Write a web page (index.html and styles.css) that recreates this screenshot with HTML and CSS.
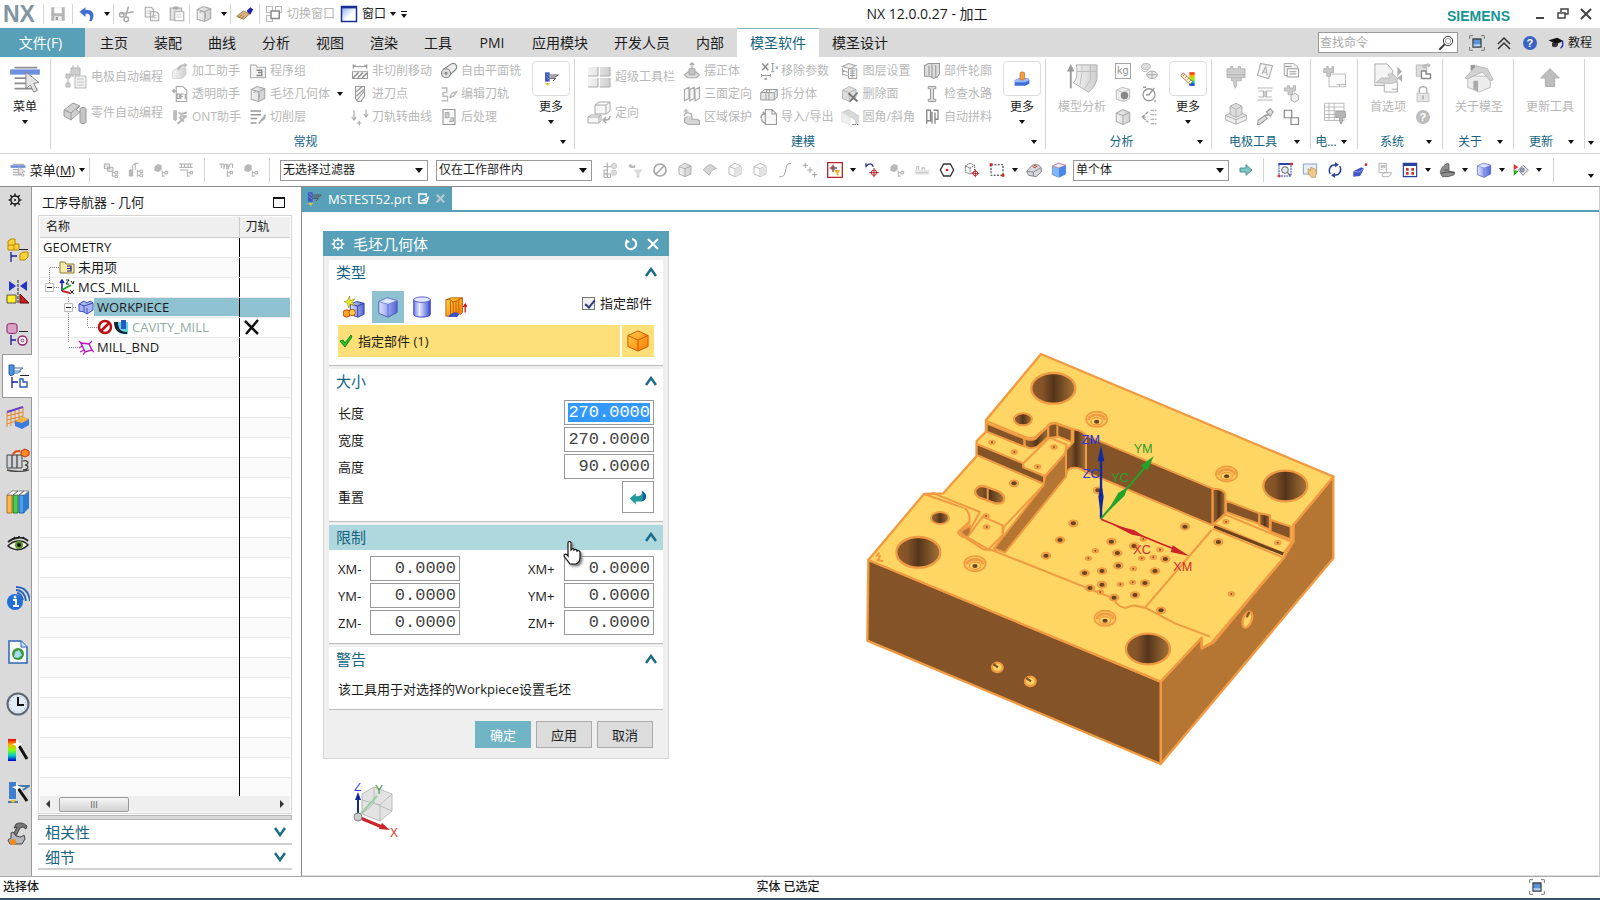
FILE: index.html
```html
<!DOCTYPE html>
<html lang="zh-CN">
<head>
    <meta charset="UTF-8">
    <meta name="viewport" content="width=device-width, initial-scale=1.0">
    <title>NX 12.0.0.27 - 加工</title>
    <link rel="stylesheet" href="styles.css">
</head>
<body>

<!-- icon sprite -->
<svg class="sprite" aria-hidden="true">
    <defs>
        <linearGradient id="gBlue" x1="0" x2="1"><stop offset="0" stop-color="#dfe6ff"/><stop offset="1" stop-color="#4d62d8"/></linearGradient>
        <linearGradient id="gGray" x1="0" x2="1"><stop offset="0" stop-color="#f4f4f4"/><stop offset="1" stop-color="#cfcfcf"/></linearGradient>
        <linearGradient id="gCyl" x1="0" x2="1"><stop offset="0" stop-color="#6f80ee"/><stop offset=".35" stop-color="#e8ecff"/><stop offset="1" stop-color="#3a4fd0"/></linearGradient>
        <linearGradient id="gRain" x1="0" y1="0" x2="0" y2="1"><stop offset="0" stop-color="#e00"/><stop offset=".25" stop-color="#fa0"/><stop offset=".5" stop-color="#8f0"/><stop offset=".75" stop-color="#0cc"/><stop offset="1" stop-color="#00c"/></linearGradient>
        <linearGradient id="gWin" x1="0" y1="0" x2="1" y2="1"><stop offset="0" stop-color="#7fa8ea"/><stop offset=".6" stop-color="#fff"/></linearGradient>
        <linearGradient id="gOr" x1="0" x2="1" y2="1"><stop offset="0" stop-color="#ffd34a"/><stop offset="1" stop-color="#ff7a00"/></linearGradient>
    </defs>
    <symbol id="save" viewBox="0 0 24 24"><path d="M3 3h18v18H3z" fill="#b5b5b5"/><path d="M7 3h10v8H7z" fill="#fff"/><path d="M7 15h10v6H7z" fill="#eee"/><path d="M9 16h3v4H9z" fill="#999"/></symbol>
    <symbol id="undo" viewBox="0 0 24 24"><path d="M2 9l8-6v4c9-2 14 5 8 15l-3-1c3-7 0-10-5-9v4z" fill="#3f6fd0"/></symbol>
    <symbol id="cut" viewBox="0 0 24 24"><path d="M14 2L10 16M4 12l17-3" stroke="#aaa" stroke-width="2" fill="none"/><circle cx="5" cy="13" r="3" fill="none" stroke="#aaa" stroke-width="2"/><circle cx="11" cy="19" r="3" fill="none" stroke="#aaa" stroke-width="2"/></symbol>
    <symbol id="copy" viewBox="0 0 24 24"><path d="M3 3h8l3 3v10H3zM10 9h8l3 3v9H10z" fill="#f5f5f5" stroke="#aaa" stroke-width="1.500"/><path d="M5 8h6M5 11h4M12 14h6M12 17h6" stroke="#bbb"/></symbol>
    <symbol id="paste" viewBox="0 0 24 24"><path d="M3 4h15v16H3z" fill="#e2e2e2" stroke="#aaa" stroke-width="1.500"/><path d="M7 2h7v4H7z" fill="#aaa"/><path d="M9 9h12v12H9z" fill="#fff" stroke="#aaa" stroke-width="1.500"/><path d="M11 13h7M11 16h7" stroke="#bbb"/></symbol>
    <symbol id="blank" viewBox="0 0 24 24"><path d="M3 6l8-4 10 3v13l-8 4-10-3z" fill="url(#gGray)" stroke="#aaa" stroke-width="1.500"/><path d="M3 6l10 3 8-4M13 9v13M6 10l4-2 4 3v7" fill="none" stroke="#aaa" stroke-width="1.500"/></symbol>
    <symbol id="brush" viewBox="0 0 24 24"><path d="M1 15l9-7 8 4-8 7z" fill="#d9b37a" stroke="#8a6a3a"/><path d="M3 17l5-4M6 19l5-4" stroke="#8a6a3a"/><path d="M14 8l5-5 4 3-4 7z" fill="#2424a8"/></symbol>
    <symbol id="switch" viewBox="0 0 24 24"><path d="M2 2h8v8H2zM14 2h8v8h-8zM2 14h8v8H2z" fill="#fff" stroke="#bbb" stroke-width="1.500"/><path d="M8 8h11v10H8z" fill="#fff" stroke="#888" stroke-width="2"/></symbol>
    <symbol id="window" viewBox="0 0 24 24"><path d="M2 2h20v20H2z" fill="url(#gWin)" stroke="#1a2d96" stroke-width="2"/><path d="M2 3h20" stroke="#1a2d96" stroke-width="3"/></symbol>
    <symbol id="menuico" viewBox="0 0 36 32"><path d="M6 3h26M2 9h32M6 21h18M6 27h26M6 15h20" stroke="#8e8e8e" stroke-width="2"/><path d="M1 5h34v6H1z" fill="#6c8fe0"/><path d="M19 8v19l5-4 4 8 4-2-4-8 6-1z" fill="#e4e4e4" stroke="#777"/></symbol>
    <symbol id="auto1" viewBox="0 0 24 24"><path d="M8 3h9v7H8zM10 0v3M15 0v3M3 9h4v4H3zM3 18h4v4H3zM5 13v5M7 11h4" fill="#cfcfcf" stroke="#b5b5b5"/><path d="M12 11h11v12H12z" fill="#f0f0f0" stroke="#bbb"/><path d="M14 14h7M14 17h7M14 20h7" stroke="#c5c5c5"/></symbol>
    <symbol id="auto2" viewBox="0 0 24 24"><path d="M1 9l9-7 7 3-4 4 4 2-9 8-7-4z" fill="#d0d0d0" stroke="#9c9c9c"/><path d="M8 12l8-7M8 19v-7l-7-3" stroke="#999" fill="none"/><path d="M17 8c0-2 6-2 6 0v13c0 2-6 2-6 0z" fill="#c5c5c5" stroke="#999"/></symbol>
    <symbol id="help1" viewBox="0 0 24 24"><path d="M2 12l6-4h12v9l-5 5H2z" fill="url(#gGray)" stroke="#ccc"/><path d="M8 10c2-6 6-7 10-7l-1-2 5 3-4 4v-2c-4 0-5 1-7 5z" fill="#bbb"/></symbol>
    <symbol id="def" viewBox="0 0 24 24"><path d="M7 2h9l5 5v15H7z" fill="#fff" stroke="#aaa" stroke-width="1.500"/><path d="M1 8h6M4 5v6" stroke="#aaa" stroke-width="2"/><path d="M8 12h3v6H8zM13 12h4M13 15h3M13 12v7M19 12v7" stroke="#999" stroke-width="1.500" fill="none"/></symbol>
    <symbol id="tools" viewBox="0 0 24 24"><path d="M3 3h5v12l-2 3-3-3z" fill="#bbb"/><path d="M10 6l4 2 7-2M11 12l6 6M20 11L9 21M12 11h9" stroke="#b5b5b5" stroke-width="2.500" fill="none"/></symbol>
    <symbol id="prog" viewBox="0 0 24 24"><path d="M2 4h7l2 3h11v14H2z" fill="#f3f3f3" stroke="#aaa" stroke-width="1.500"/><path d="M10 11h7v3h-5M17 14v4h-7" fill="none" stroke="#888" stroke-width="1.800"/></symbol>
    <symbol id="layers" viewBox="0 0 24 24"><path d="M2 4h14M2 9h14M2 14h9M2 20h8" stroke="#999" stroke-width="1.800"/><path d="M22 9l-9 12M20 10c3 2 0 6-6 8" stroke="#aaa" stroke-width="2" fill="none"/></symbol>
    <symbol id="noncut" viewBox="0 0 24 24"><path d="M3 3v6M21 3v6M3 6h18M3 6l3-2M21 6l-3-2M2 13h20v9H2z" fill="none" stroke="#999" stroke-width="1.500"/><path d="M3 21l7-7M9 21l7-7M15 21l6-6" stroke="#888" stroke-width="2"/></symbol>
    <symbol id="plunge" viewBox="0 0 24 24"><path d="M6 2h12v13l-5 7H9l-3-4z" fill="#f5f5f5" stroke="#999" stroke-width="1.500"/><path d="M7 15l10-9M8 20L18 8M7 9l8-7" stroke="#999" stroke-width="1.500"/></symbol>
    <symbol id="path" viewBox="0 0 24 24"><path d="M4 3v12M1 12l3 4 3-4M20 2v8M17 8l3 4 3-4M8 20h6M11 17v6" stroke="#aaa" stroke-width="1.600" fill="none"/></symbol>
    <symbol id="free" viewBox="0 0 24 24"><path d="M4 10L16 2c5-1 8 4 5 8L10 20" fill="#eee" stroke="#888" stroke-width="1.500"/><circle cx="8" cy="15" r="6" fill="#ddd" stroke="#888" stroke-width="1.500"/><circle cx="8" cy="15" r="2" fill="#888"/></symbol>
    <symbol id="edit" viewBox="0 0 24 24"><path d="M2 4h7v6H4v5h6v6H2M13 17l3-6 6-2-4 6-5 2" fill="none" stroke="#bbb" stroke-width="2"/></symbol>
    <symbol id="post" viewBox="0 0 24 24"><path d="M4 2h16v20H4z" fill="#f8f8f8" stroke="#999" stroke-width="1.500"/><path d="M7 6h5v7H7zM14 13h4v5h-6" fill="#ccc" stroke="#999"/></symbol>
    <symbol id="cutter" viewBox="0 0 24 24"><path d="M3 2h7v14H3z" fill="#3f57c4"/><path d="M5 4l4 3M4 8l5 4" stroke="#9ab"/><path d="M2 18h9l-4 4z" fill="#e6c33c"/><path d="M10 6h13l-5 3h-7M10 11h9l-4 4" fill="none" stroke="#555" stroke-width="1.500"/></symbol>
    <symbol id="tiles" viewBox="0 0 24 24"><path d="M1 2h10v9H1zM13 2h10v9H13zM1 13h10v9H1zM13 13h10v9H13z" fill="url(#gGray)"/><path d="M1 11h10V2M13 11h10V2M1 22h10v-9M13 22h10v-9" fill="none" stroke="#aaa"/></symbol>
    <symbol id="orient" viewBox="0 0 24 24"><path d="M8 4l4-3h11v9l-4 3H8zM8 4h11l4-3M19 4v9M1 16l3-2h10v6l-2 2H1zM1 16h11l2-2M12 16v6" fill="#f7f7f7" stroke="#aaa"/><path d="M23 15c0 4-3 4-6 4m2-3l-3 3 3 3" fill="none" stroke="#aaa" stroke-width="1.500"/></symbol>
    <symbol id="align" viewBox="0 0 24 24"><path d="M12 1v8M9 4l3-3 3 3M2 17l5-4h10l5 4-4 4H6z" fill="#ddd" stroke="#aaa" stroke-width="1.500"/><path d="M8 9h8v8H8z" fill="#c4c4c4" stroke="#999"/></symbol>
    <symbol id="three" viewBox="0 0 24 24"><path d="M2 6l6-3v15l-6 3zM9 6l6-3v15l-6 3zM16 6l6-3v15l-6 3z" fill="#f5f5f5" stroke="#aaa" stroke-width="1.500"/></symbol>
    <symbol id="region" viewBox="0 0 24 24"><path d="M4 1v6M1 4h6M2 14l4-3h6v4h7l3 2v5H7l-5-3z" fill="#d5d5d5" stroke="#aaa" stroke-width="1.500"/><path d="M2 11V8l4-2 5 2v4" fill="#f3f3f3" stroke="#aaa" stroke-width="1.500"/></symbol>
    <symbol id="rmparam" viewBox="0 0 24 24"><path d="M3 2l8 9M11 2l-8 9" stroke="#888" stroke-width="2"/><path d="M15 2h4M17 2v11M15 13h4M21 6l3 3M24 6l-3 3M2 16v4M14 16v4M2 18h12M6 21l3 3M9 21l-3 3" stroke="#999" stroke-width="1.400" fill="none"/></symbol>
    <symbol id="split" viewBox="0 0 24 24"><path d="M1 10l5-4h17v10l-4 4H1zM1 10h18l4-4M19 10v10M10 6l-2 4v10M13 6l-1 4v10" fill="#e5e5e5" stroke="#999" stroke-width="1.300"/></symbol>
    <symbol id="impexp" viewBox="0 0 24 24"><path d="M7 2h9l6 6v14H7zM16 2v6h6" fill="#f8f8f8" stroke="#999" stroke-width="1.500"/><path d="M2 14c-1-4 1-6 4-6l-2-3M2 15c1 4 3 5 6 5" fill="none" stroke="#999" stroke-width="2"/></symbol>
    <symbol id="layset" viewBox="0 0 24 24"><path d="M2 6l8-4 10 3-8 4zM2 11l8 3M2 16l8 3M2 6v12" fill="#eee" stroke="#aaa" stroke-width="1.500"/><path d="M10 9h11v13H10zM12 12h7M12 15h7M12 18h7M15 10v11" fill="#f8f8f8" stroke="#999" stroke-width="1.200"/></symbol>
    <symbol id="delface" viewBox="0 0 24 24"><path d="M2 7l9-5 9 4v11l-9 5-9-4z" fill="#ddd" stroke="#aaa"/><path d="M2 7l9 3 9-4M11 10v12" fill="none" stroke="#aaa"/><path d="M10 11l12 11M22 10L12 22" stroke="#777" stroke-width="2.500"/></symbol>
    <symbol id="fillet" viewBox="0 0 24 24"><path d="M1 6l9-4 13 8v10l-3 1c0-6-4-8-8-9z" fill="#d8d8d8" stroke="#c3c3c3"/><path d="M1 6v12l11 4V12z" fill="#eee" stroke="#ddd"/><path d="M15 22h8" stroke="#666" stroke-width="1.500" stroke-dasharray="2 1"/></symbol>
    <symbol id="outline" viewBox="0 0 24 24"><path d="M2 5l5-3h15v14l-3 4-5 2-5-3H2z" fill="#ddd" stroke="#999" stroke-width="1.400"/><path d="M8 5v13M12 3v17M17 4v16" stroke="#999" stroke-width="1.400"/></symbol>
    <symbol id="water" viewBox="0 0 24 24"><path d="M7 2h10v3h-3v14h3v3H7v-3h3V5H7z" fill="#ddd" stroke="#999" stroke-width="1.300"/></symbol>
    <symbol id="autofit" viewBox="0 0 24 24"><path d="M5 3h5v14H5zM14 3h6v12h-4v6M12 5v16M5 17v4M16 6v9" fill="none" stroke="#888" stroke-width="1.800"/></symbol>
    <symbol id="stamp" viewBox="0 0 24 24"><path d="M1 14l6-3h14l2 3v5l-6 3H1z" fill="#3f6fd6"/><path d="M1 14l6-3h14l2 3-6 3H1z" fill="#9bb9f4"/><path d="M9 3c0-2 7-2 7 0v9c0 2-7 2-7 0z" fill="#f0a04a" stroke="#b06a20"/></symbol>
    <symbol id="model" viewBox="0 0 34 32"><path d="M11 2h22v13c0 6-4 12-9 16L8 21c4-4 4-11 3-19z" fill="url(#gGray)" stroke="#aaa"/><path d="M12 9h21M17 2v8l-2 13M26 2v16l-6 9" fill="none" stroke="#bbb"/><path d="M4 27V9H1l4-8 4 8H6v18z" fill="#999"/></symbol>
    <symbol id="cubedot" viewBox="0 0 24 24"><path d="M3 7l8-4 10 3v12l-8 4-10-3z" fill="#eee" stroke="#bbb" stroke-width="1.300"/><path d="M3 7l10 3 8-4M13 10v12" fill="none" stroke="#bbb"/><circle cx="14" cy="14" r="5" fill="#888"/></symbol>
    <symbol id="cubeg" viewBox="0 0 24 24"><path d="M3 7l9-5 9 4v12l-9 4-9-4z" fill="url(#gGray)" stroke="#aaa" stroke-width="1.400"/><path d="M3 7l9 3 9-4M12 10v12" fill="none" stroke="#aaa" stroke-width="1.400"/></symbol>
    <symbol id="cubew" viewBox="0 0 24 24"><path d="M3 7l9-5 9 4v12l-9 4-9-4z" fill="#fafafa" stroke="#b5b5b5" stroke-width="1.400"/><path d="M3 7l9 3 9-4M12 10v12" fill="none" stroke="#bbb" stroke-width="1.400"/><path d="M12 10l9-4v12l-9 4z" fill="#e3e3e3"/></symbol>
    <symbol id="balls" viewBox="0 0 24 24"><ellipse cx="8" cy="6" rx="6" ry="4" fill="#ddd" stroke="#aaa"/><ellipse cx="16" cy="17" rx="7" ry="5" fill="#e8e8e8" stroke="#999"/><path d="M2 10c3 4 6 3 9 1M16 12v10M9 17h14" fill="none" stroke="#999"/></symbol>
    <symbol id="gauge" viewBox="0 0 24 24"><circle cx="12" cy="13" r="8" fill="none" stroke="#999" stroke-width="1.700"/><path d="M12 13l7-9M8 13h5M4 3h4M20 20v3" stroke="#999" stroke-width="1.700"/></symbol>
    <symbol id="split3" viewBox="0 0 24 24"><path d="M11 5l-8 7 8 7M3 12h7M14 3h8M14 9h8M14 15h8M14 21h8" fill="none" stroke="#999" stroke-width="1.600" stroke-dasharray="5 1"/></symbol>
    <symbol id="ruler" viewBox="0 0 24 24"><path d="M14 2h8v20h-8z" fill="url(#gRain)"/><path d="M1 7l4-4 14 13-4 4z" fill="#fff4cc" stroke="#a33"/><path d="M5 7l2-2M8 10l2-2M11 13l2-2M14 16l2-2" stroke="#a33"/></symbol>
    <symbol id="holder" viewBox="0 0 28 32"><path d="M2 5h5V2h3v3h7V2h3v3h6v12h-5v4h-6v5l-2 5-2-5v-5H8v-4H2z" fill="#cdcdcd" stroke="#aaa"/><path d="M2 13h24M8 17h13" stroke="#aaa"/></symbol>
    <symbol id="block" viewBox="0 0 32 32"><path d="M2 19l14-6 14 6v6l-14 6-14-6z" fill="#eee" stroke="#999"/><path d="M2 19l14 6 14-6M16 25v6" fill="none" stroke="#999"/><path d="M8 7l8-4 8 4v11l-8 4-8-4z" fill="#ddd" stroke="#999"/><path d="M8 7l8 4 8-4M16 11v11" fill="none" stroke="#aaa"/></symbol>
    <symbol id="plana" viewBox="0 0 24 24"><path d="M6 2l16 3-5 17-15-4zM8 16l5-10 2 12M9 13l6 1" fill="#f5f5f5" stroke="#aaa" stroke-width="1.400"/></symbol>
    <symbol id="section" viewBox="0 0 24 24"><path d="M2 4h20M2 20h20M3 8h7v8H3M21 8h-7v8h7M12 8v8" stroke="#b5b5b5" stroke-width="1.600" fill="none"/></symbol>
    <symbol id="pencil" viewBox="0 0 24 24"><path d="M14 5l5-4 4 4-4 6zM3 16l9-6 3 4-10 8H2z" fill="#ddd" stroke="#999" stroke-width="1.400"/><path d="M12 10l5-1" stroke="#999" stroke-width="2"/></symbol>
    <symbol id="cards" viewBox="0 0 24 24"><path d="M3 2h12l6 4v12H3z" fill="#f4f4f4" stroke="#aaa" stroke-width="1.300"/><path d="M7 9h15v11H7zM10 13h9M10 16h9M4 6h9" fill="#fafafa" stroke="#999" stroke-width="1.300"/></symbol>
    <symbol id="holder2" viewBox="0 0 24 24"><path d="M3 4h4V1h3v3h5V1h3v7h-4v5H8V8H3z" fill="#ccc" stroke="#aaa"/><path d="M12 14l5-3 5 3v6l-5 3-5-3z" fill="#eee" stroke="#999"/></symbol>
    <symbol id="boxes" viewBox="0 0 24 24"><path d="M3 3h10v10H3zM12 13h10v9H12z" fill="#fafafa" stroke="#888" stroke-width="1.600"/></symbol>
    <symbol id="sheet" viewBox="0 0 32 32"><path d="M8 12h22v17H8zM18 26h12M22 26v3" fill="#fafafa" stroke="#aaa"/><path d="M1 5h4V2h2v3h5V2h2v8h-4v5H5v-5H1z" fill="#c8c8c8" stroke="#aaa"/></symbol>
    <symbol id="grid" viewBox="0 0 32 32"><path d="M2 3h26v23H2zM2 8h26M2 13h26M2 18h26M2 22h26M8 3v23M15 3v23" fill="none" stroke="#aaa"/><path d="M17 14h13v8h-4v5l-2 4-2-4v-5h-5z" fill="#b5b5b5" stroke="#999"/></symbol>
    <symbol id="pref" viewBox="0 0 32 32"><path d="M2 1h13l6 7v16H2z" fill="#f4f4f4" stroke="#aaa"/><path d="M12 20h14v11H12zM20 28h6" fill="#fafafa" stroke="#aaa"/><path d="M3 21l6-5h9l-2-4 4-1 6 5v4l-7 2z" fill="#d2d2d2" stroke="#bbb"/><path d="M26 4l5 5-5 5zM31 12v8l-5-4z" fill="#b0b0b0"/></symbol>
    <symbol id="clip" viewBox="0 0 24 24"><path d="M3 4h14v15H3z" fill="#ddd" stroke="#aaa"/><path d="M11 7c0-4 4-5 7-4l-1-2 6 3-4 4v-2c-3 0-4 0-4 3z" fill="#bbb"/><path d="M10 12h6v4h6v6H10z" fill="#fff" stroke="#888" stroke-width="1.800"/></symbol>
    <symbol id="lock" viewBox="0 0 24 24"><path d="M7 11V6c0-5 10-5 10 0v5" fill="none" stroke="#b5b5b5" stroke-width="2"/><path d="M4 11h16v11H4z" fill="#e5e5e5" stroke="#b5b5b5"/><path d="M12 14v5" stroke="#aaa" stroke-width="2"/></symbol>
    <symbol id="home" viewBox="0 0 32 32"><path d="M7 2h5v6H7z" fill="#999"/><path d="M4 14v12l12 5 12-5V14z" fill="#ececec" stroke="#bbb"/><path d="M1 16L13 3l12 3 6 12-3 1-8-9-4 1L4 17z" fill="#d2d2d2" stroke="#b5b5b5"/><path d="M10 19h5v11l-5-2z" fill="#aaa"/></symbol>
    <symbol id="up" viewBox="0 0 32 32"><path d="M16 6l10 10h-5v9H11v-9H6z" fill="#bdbdbd" stroke="#aaa"/></symbol>
    <symbol id="filt" viewBox="0 0 24 24"><path d="M2 3h8v7H2zM7 8h8v6H7z" fill="#e5e5e5" stroke="#aaa" stroke-width="1.400"/><path d="M14 14v8M14 16h4M14 21h4M18 14h4v4h-4zM18 20h4v3h-4z" fill="none" stroke="#aaa" stroke-width="1.400"/></symbol>
    <symbol id="filt4" viewBox="0 0 24 24"><path d="M2 12h5v9H2zM7 5l4-3h5M7 5v7" fill="#bbb" stroke="#aaa" stroke-width="1.400"/><path d="M11 3v9M14 12v10M14 14h4M14 20h4M18 12h4v4h-4zM18 18h4v4h-4z" fill="none" stroke="#aaa" stroke-width="1.400"/></symbol>
    <symbol id="filt2" viewBox="0 0 24 24"><path d="M2 3h20M2 8h20M5 3v5M10 3v5M15 3v5M19 3v5M3 12h12" stroke="#aaa" stroke-width="1.500"/><path d="M14 13v9M14 16h4M14 21h4M18 14h4v4h-4z" fill="none" stroke="#aaa" stroke-width="1.400"/></symbol>
    <symbol id="filt3" viewBox="0 0 24 24"><path d="M2 7l5-4 6 2v7l-5 3-6-2z" fill="#b8b8b8"/><path d="M14 13v9M14 16h4M14 21h4M18 14h4v4h-4z" fill="none" stroke="#aaa" stroke-width="1.400"/></symbol>
    <symbol id="toolf" viewBox="0 0 24 24"><path d="M2 3h3v6M5 3h4v8M9 8l2-5h2v8M15 3v8l3-8h4v6" fill="none" stroke="#aaa" stroke-width="1.500"/><path d="M14 13v9M14 16h4M14 21h4M18 14h4v4h-4z" fill="none" stroke="#aaa" stroke-width="1.400"/></symbol>
    <symbol id="selall" viewBox="0 0 24 24"><path d="M8 1v12M2 7h12M3 12h5v5H3zM3 18h5v5H3zM8 18h5v5H8z" fill="none" stroke="#aaa" stroke-width="1.500"/><circle cx="18" cy="6" r="4" fill="#ddd" stroke="#bbb"/><circle cx="18" cy="16" r="4" fill="#ddd" stroke="#bbb"/></symbol>
    <symbol id="funnel" viewBox="0 0 24 24"><path d="M2 6c2-4 5-3 6 0l4-2v5H5z" fill="#bbb"/><path d="M11 12h11l-4 5v6h-3v-6z" fill="#ddd" stroke="#ccc"/></symbol>
    <symbol id="no" viewBox="0 0 24 24"><circle cx="12" cy="12" r="9" fill="none" stroke="#a5a5a5" stroke-width="2.500"/><path d="M6 18L18 6" stroke="#a5a5a5" stroke-width="2.500"/></symbol>
    <symbol id="face" viewBox="0 0 24 24"><path d="M2 12C7 5 11 4 14 4l8 6c-4 0-9 4-11 10z" fill="#d5d5d5" stroke="#aaa" stroke-width="1.300"/></symbol>
    <symbol id="curve" viewBox="0 0 24 24"><path d="M3 22c16 2 4-20 18-20" fill="none" stroke="#aaa" stroke-width="1.600"/></symbol>
    <symbol id="pluses" viewBox="0 0 24 24"><path d="M5 1v8M1 5h8M12 8v8M8 12h8M19 15v8M15 19h8" stroke="#999" stroke-width="1.300"/></symbol>
    <symbol id="snap" viewBox="0 0 24 24"><path d="M1 1h22v22H1z" fill="#fff" stroke="#b8262d" stroke-width="2"/><path d="M9 4v11M4 9h11" stroke="#333" stroke-width="1.500"/><circle cx="9" cy="9" r="3" fill="none" stroke="#b8262d"/><path d="M11 12h9l-3 4v5l-3-2v-3z" fill="#f0b020"/></symbol>
    <symbol id="snap2" viewBox="0 0 24 24"><path d="M3 8V2M3 7c4-6 9-5 11 0" fill="none" stroke="#27348b" stroke-width="2"/><path d="M15 9v14M8 16h14" stroke="#b8262d" stroke-width="1.500"/><circle cx="15" cy="16" r="4" fill="none" stroke="#b8262d" stroke-width="1.500"/></symbol>
    <symbol id="bars" viewBox="0 0 24 24"><path d="M1 12h22v7H1z" fill="#e5e5e5"/><path d="M4 12V7h3v5M12 12V9h4v3M3 16h18" stroke="#ccc" stroke-width="2" fill="none"/></symbol>
    <symbol id="hex" viewBox="0 0 24 24"><path d="M7 3h10l5 9-5 9H7l-5-9z" fill="#fff" stroke="#333" stroke-width="2"/><circle cx="12" cy="12" r="2" fill="#c22"/></symbol>
    <symbol id="dotcube" viewBox="0 0 24 24"><path d="M2 6l7-4 7 3v9l-7 4-7-3zM2 6l7 3 7-4M9 9v8" fill="none" stroke="#444" stroke-width="1.400" stroke-dasharray="2 1.500"/><path d="M17 11v12M11 17h12" stroke="#b8262d" stroke-width="1.400"/><circle cx="17" cy="17" r="3.500" fill="none" stroke="#b8262d" stroke-width="1.400"/></symbol>
    <symbol id="marq" viewBox="0 0 24 24"><path d="M3 4h18v16H3z" fill="none" stroke="#333" stroke-width="1.600" stroke-dasharray="3 2"/><path d="M1 2h4v4H1zM19 18h4v4h-4z" fill="#d22"/></symbol>
    <symbol id="shaded" viewBox="0 0 24 24"><path d="M1 14l8-9c6-3 12 0 14 4v6l-8 7-11-2z" fill="#d5d9df" stroke="#555"/><path d="M1 14l10 1 11-6M11 15v6" fill="none" stroke="#666"/><path d="M10 7l5 2M12 5l5 2" stroke="#c33" stroke-width="1.500"/></symbol>
    <symbol id="bcube" viewBox="0 0 24 24"><path d="M2 6l9-4 11 3v13l-10 5-10-4z" fill="url(#gBlue)" stroke="#4658b8"/><path d="M2 6l10 3 10-4-11-3z" fill="#dfe7ff" stroke="#7385d8"/><path d="M12 9v14" stroke="#5b6cd0"/></symbol>
    <symbol id="redcube" viewBox="0 0 24 24"><path d="M2 6l9-4 11 3v13l-10 5-10-4z" fill="#7fb4f5" stroke="#5a88d8"/><path d="M2 6l10 3 10-4-11-3z" fill="#e6eefc" stroke="#d66"/><path d="M12 9l10-4v13l-10 5z" fill="#4b87e8"/></symbol>
    <symbol id="arrow" viewBox="0 0 24 24"><path d="M3 9h9V4l9 8-9 8v-5H3z" fill="#7fc6c6" stroke="#3c7f86" stroke-width="1.300"/></symbol>
    <symbol id="fit" viewBox="0 0 24 24"><path d="M3 3h18v18H3z" fill="#fff" stroke="#2b46a8" stroke-width="1.500" stroke-dasharray="3 1"/><path d="M2 3h20" stroke="#2b46a8" stroke-width="3"/><circle cx="12" cy="12" r="5" fill="#dfeaf5" stroke="#666" stroke-width="1.500"/><path d="M16 16l4 5" stroke="#666" stroke-width="2"/><path d="M1 19h4v4H1zM20 1h4v4h-4z" fill="#d33"/></symbol>
    <symbol id="pan" viewBox="0 0 24 24"><path d="M2 3h20v15H2z" fill="#e8effa" stroke="#8aa0c8" stroke-width="1.500"/><path d="M9 10l4 3V8l3 1 4 2 2 5-2 7h-6l-5-7z" fill="#f0c98a" stroke="#b98d4a"/></symbol>
    <symbol id="rotate" viewBox="0 0 24 24"><path d="M5 18C1 11 5 4 13 4M19 6c4 7 0 14-8 14" fill="none" stroke="#2f4496" stroke-width="2.200"/><path d="M12 0l6 4-6 4zM12 24l-6-4 6-4z" fill="#2f4496"/></symbol>
    <symbol id="persp" viewBox="0 0 24 24"><path d="M2 14l12-6 4 2-6 11-10 1z" fill="#4358c8"/><path d="M2 14l8 1 8-5" stroke="#aab6f5" fill="none"/><circle cx="21" cy="4" r="2" fill="#d22"/></symbol>
    <symbol id="grayd" viewBox="0 0 24 24"><path d="M3 2h11v14H3zM6 5h2v3H6zM10 5h2v3h-2zM6 11h2M8 18l3-2h11l-4 6H8z" fill="#fafafa" stroke="#aaa" stroke-width="1.300"/></symbol>
    <symbol id="layout4" viewBox="0 0 24 24"><path d="M2 2h20v20H2z" fill="#fff" stroke="#27429c" stroke-width="1.800"/><path d="M2 4h20" stroke="#27429c" stroke-width="4"/><path d="M6 9h4v4H6zM14 9h4v4h-4zM6 15h4v4H6zM14 15h4v4h-4z" fill="#c8352d"/></symbol>
    <symbol id="lshape" viewBox="0 0 24 24"><path d="M2 16C3 8 8 4 13 2l2 1v11l8 1v4l-9 3H5z" fill="#8f8f8f" stroke="#444"/><path d="M3 17l11-2 9 1M8 12h6" fill="none" stroke="#333"/></symbol>
    <symbol id="clipv" viewBox="0 0 24 24"><path d="M1 3l7 5-7 4z" fill="#d33"/><path d="M1 12l7 2-7 7z" fill="#2a2"/><path d="M8 12l7-7 8 7-8 8z" fill="#e3e7ef" stroke="#556"/><circle cx="14" cy="12" r="3" fill="#9ab" stroke="#556"/></symbol>
    <symbol id="gear" viewBox="0 0 24 24"><circle cx="12" cy="12" r="7" fill="none" stroke="currentColor" stroke-width="2.600"/><circle cx="12" cy="12" r="1.800" fill="currentColor"/><path d="M12 1v4M12 19v4M1 12h4M19 12h4M4 4l3 3M17 17l3 3M20 4l-3 3M7 17l-3 3" stroke="currentColor" stroke-width="2.600"/></symbol>
    <symbol id="frame" viewBox="0 0 24 24"><path d="M1 6V1h5M18 1h5v5M23 18v5h-5M6 23H1v-5" fill="none" stroke="#777" stroke-width="1.500"/><path d="M6 6h12v12H6z" fill="#5b93d8" stroke="#444" stroke-width="2"/><path d="M7 14h10v3H7z" fill="#b9dcf8"/></symbol>
    <symbol id="cap" viewBox="0 0 24 24"><path d="M1 8l13-4 9 5-11 5z" fill="#111"/><path d="M6 12v5c4 2 7 2 9-2v-3z" fill="#333"/><path d="M22 9v7l-3 4" stroke="#22b" stroke-width="2" fill="none"/></symbol>
    <symbol id="search" viewBox="0 0 24 24"><circle cx="15" cy="9" r="7" fill="none" stroke="#333" stroke-width="1.500"/><circle cx="15" cy="9" r="4" fill="none" stroke="#777"/><path d="M10 14l-8 8" stroke="#333" stroke-width="3"/></symbol>
    <!-- resource bar -->
    <symbol id="r1" viewBox="0 0 24 24"><path d="M2 3l3-2h4v5h4v6H2z" fill="#ffd23a" stroke="#b98600"/><path d="M2 7h6v5M8 7l2-1" fill="none" stroke="#b98600"/><path d="M14 16l3-2h5v5l-3 3h-5z" fill="#ffd23a" stroke="#b98600"/><path d="M13 11.500h9" stroke="#222"/><path d="M5 14v10M5 18h6" stroke="#1a1a9a" stroke-width="1.300"/></symbol>
    <symbol id="r2" viewBox="0 0 24 24"><path d="M3 1l7 5-7 5zM21 1l-7 5 7 5z" fill="#2433c8"/><path d="M12 0v24" stroke="#222" stroke-dasharray="3 1"/><path d="M1 15h9v8H1z" fill="#ffee22" stroke="#555"/><path d="M14 14l9 9h-9z" fill="#c81e1e" stroke="#600"/></symbol>
    <symbol id="r3" viewBox="0 0 24 24"><path d="M1 3c0-2 10-2 10 0v7c0 2-10 2-10 0z" fill="#d9a3c6" stroke="#8a1f6a"/><path d="M13 9.500h9" stroke="#222"/><path d="M5 13v10M5 18h5" stroke="#1a1a9a" stroke-width="1.300"/><circle cx="16.500" cy="18.500" r="4.500" fill="#fff" stroke="#8a1f6a" stroke-width="1.400"/><circle cx="16.500" cy="18.500" r="1.500" fill="none" stroke="#8a1f6a"/></symbol>
    <symbol id="r4" viewBox="0 0 24 24"><path d="M2 1h5v9l-3 2-2-2z" fill="#4a90dc" stroke="#2a5ca8"/><path d="M7 4h9l-3 2M7 7h7l-3 2H7" fill="none" stroke="#3a6fb8"/><path d="M13 11.500h9" stroke="#222"/><path d="M5 13v11M5 18h6" stroke="#1a1a9a" stroke-width="1.300"/><path d="M13 15h3v3h4v5h-7z" fill="#fff" stroke="#2a5ca8" stroke-width="1.400"/></symbol>
    <symbol id="r5" viewBox="0 0 24 24"><path d="M1 6v15M5 5v15M9 4v14M13 3v12M17 1v12M1 10l16-4M1 14l16-4M1 18l12-4" stroke="#e8872a" fill="none"/><path d="M1 6L17 1" stroke="#6a3fc8" stroke-width="2"/><path d="M9 15l8-4 6 2v6l-7 4-7-3z" fill="#3b7be0"/><path d="M9 15l8-4 6 2-7 4z" fill="#ffb23e"/></symbol>
    <symbol id="r6" viewBox="0 0 24 24"><path d="M1 7h15v13H1z" fill="#d0d4d8" stroke="#444"/><path d="M6 7v13M11 7v13M1 22c8 2 15 2 22 0M17 13c6-2 6 4 2 4 4 0 4 5-2 5" fill="none" stroke="#444" stroke-width="1.300"/><path d="M15 3l4-2 4 2v4l-4 2-4-2z" fill="#ff8a2a" stroke="#c03000"/><path d="M7 7c1-4 4-4 7-4" stroke="#e04a10" stroke-width="2" fill="none"/></symbol>
    <symbol id="r7" viewBox="0 0 24 24"><path d="M1 5h5v18H1z" fill="#ffb64a" stroke="#a55c00" stroke-width=".8"/><path d="M7 5h5v18H7z" fill="#4ecb4e" stroke="#167016" stroke-width=".8"/><path d="M13 5h5v18h-5z" fill="#4aa0ee" stroke="#0b4c94" stroke-width=".8"/><path d="M18 5l5-4v17l-5 5z" fill="#2e7cd0"/><path d="M1 5l5-4h17l-5 4z" fill="#fff" stroke="#777" stroke-width=".8"/><path d="M7 5l5-4M13 5l5-4" stroke="#555" fill="none"/></symbol>
    <symbol id="r8" viewBox="0 0 24 24"><path d="M2 14c5-6 15-7 20-1-6 6-14 6-20 1z" fill="#eef3e4" stroke="#222" stroke-width="1.500"/><circle cx="13" cy="13" r="4" fill="#5a9a2e"/><circle cx="13" cy="13" r="2" fill="#111"/><path d="M2 10C8 5 17 4 22 9M8 5l1 2M13 4v2M18 5l-1 2" stroke="#222" stroke-width="1.800" fill="none"/></symbol>
    <symbol id="r9" viewBox="0 0 24 24"><circle cx="9" cy="16" r="8" fill="#1f6fd6"/><path d="M7 14h3v6M7 20h6" stroke="#fff" stroke-width="2" fill="none"/><circle cx="9" cy="11" r="1.500" fill="#fff"/><path d="M10 4c6 0 9 4 10 11M10 1c9 0 13 6 14 14M11 7c3 0 5 3 6 7" fill="none" stroke="#2c64b8" stroke-width="1.800"/></symbol>
    <symbol id="r10" viewBox="0 0 24 24"><path d="M3 1h12l6 6v16H3z" fill="#f8fbff" stroke="#2c64b8" stroke-width="1.500"/><path d="M15 1v6h6" fill="#cfe0f5" stroke="#2c64b8"/><circle cx="12" cy="14" r="6" fill="#3a9a3a"/><path d="M9 12l4-2 3 5-4 3-4-1z" fill="#a8dcf5"/></symbol>
    <symbol id="r11" viewBox="0 0 24 24"><circle cx="12" cy="12" r="10.500" fill="#e3edf6" stroke="#5b6672" stroke-width="2"/><path d="M12 5v8h6" fill="none" stroke="#111" stroke-width="2"/><circle cx="12" cy="12" r="8" fill="none" stroke="#89a" stroke-dasharray="1 3"/></symbol>
    <symbol id="r12" viewBox="0 0 24 24"><path d="M2 1h8v22H2z" fill="url(#gRain)"/><path d="M12 6l9 15" stroke="#111" stroke-width="3"/><path d="M11 1l2 4 4 1-4 2-2 4-1-4-4-2 4-1z" fill="#fff"/></symbol>
    <symbol id="r13" viewBox="0 0 24 24"><path d="M3 2h7v17H3z" fill="#3f7fd0"/><path d="M10 6h13l-6 4M2 22h10" fill="none" stroke="#47a" stroke-width="1.800"/><path d="M12 8l9 13" stroke="#111" stroke-width="3"/><path d="M11 2l1 4 4 1-4 2-1 4-1-4-4-2 4-1z" fill="#fff"/><path d="M3 20h8l-4 3z" fill="#e6c33c"/></symbol>
    <symbol id="r14" viewBox="0 0 24 24"><path d="M10 2c4-2 8-1 11 2l-1 3-3-2-3 1-4 8-4 1 5-10-3 1z" fill="#777" stroke="#333" stroke-width=".8"/><path d="M5 11l2-1 3 4 5 1 3-2 1 4-3 5H4l-2-4 3-2z" fill="#b5b5bd" stroke="#444"/><circle cx="7" cy="20" r="3" fill="#f08a1a"/></symbol>
    <!-- tree -->
    <symbol id="t1" viewBox="0 0 16 16"><path d="M1 3h5l1 2h8v9H1z" fill="#f7e9a8" stroke="#8c7a30"/><path d="M8 7h4v2.500H8M12 9v3H8" fill="none" stroke="#1a1a9a" stroke-width="1.200"/></symbol>
    <symbol id="t2" viewBox="0 0 16 16"><path d="M3 12V2M1 4l2-3 2 3" fill="none" stroke="#1522b8" stroke-width="1.500"/><path d="M3 11l9-5" stroke="#1a9a1a" stroke-width="1.500"/><path d="M3 12l8 2" stroke="#c22" stroke-width="2"/><path d="M7 1h3l-3 4h3M12 2l2 3 1-3M11 11l4 4M15 11l-4 4" fill="none" stroke="#222"/></symbol>
    <symbol id="t3" viewBox="0 0 16 16"><path d="M1 5l5-3 3 2 3-2 3 2v7l-6 4-3-2-5-1z" fill="#a9b6f3" stroke="#3a4cc0"/><path d="M1 5l5 2v6M6 7l9-3M9 9v6" fill="none" stroke="#3a4cc0"/></symbol>
    <symbol id="t4" viewBox="0 0 16 16"><circle cx="8" cy="8" r="6" fill="#fff" stroke="#b11" stroke-width="2.500"/><path d="M4 12l8-8" stroke="#b11" stroke-width="2.500"/></symbol>
    <symbol id="t5" viewBox="0 0 16 16"><path d="M2 3h13v12h-5C5 15 2 10 2 3z" fill="#5fd8e0"/><path d="M1 3c0 8 4 12 13 12v-2C7 13 5 9 5 3z" fill="#123"/><path d="M8 1h5v9H8z" fill="#2b56c8"/></symbol>
    <symbol id="t6" viewBox="0 0 16 16"><path d="M3 4l8 1 3 6-7 2z" fill="#dff" stroke="#c018c0" stroke-width="1.400"/><path d="M1 2l3 3M11 5l3-3M14 11l2 2M7 13l-2 3M1 9l3-2M2 13l4-2" stroke="#c018c0" stroke-width="1.200"/></symbol>
    <!-- dialog -->
    <symbol id="d1" viewBox="0 0 24 24"><path d="M8 9l7-3 8 2v12l-7 3-8-3z" fill="url(#gBlue)" stroke="#2b3a9a"/><path d="M8 9l8 2 7-3M16 11v12" fill="none" stroke="#2b3a9a"/><path d="M7 0l1 5 5-2-3 4 3 3-5-1-2 4-1-5-4-2 4-1z" fill="#e8e832" stroke="#8a8a10" stroke-width=".6"/><circle cx="4" cy="19" r="4" fill="#ffa52a" stroke="#c23a00"/><circle cx="10" cy="18" r="3.500" fill="#ffd04a" stroke="#c23a00"/></symbol>
    <symbol id="d3" viewBox="0 0 24 24"><path d="M3 4v16c0 4 18 4 18 0V4z" fill="url(#gCyl)" stroke="#33c"/><ellipse cx="12" cy="4" rx="9" ry="3" fill="#dfe7ff" stroke="#55c"/></symbol>
    <symbol id="d4" viewBox="0 0 24 24"><path d="M1 4l6-2h12v16l-2 2c-4-3-8-3-12 2H1z" fill="url(#gOr)" stroke="#b85a00"/><path d="M1 4h5l2 2h4l3-2 4-2M6 5v16M9 6v12M12 6v12M15 4v14" fill="none" stroke="#b85a00"/><path d="M4 22c4-5 8-5 12-2l-3 3H4z" fill="#3c50c8"/><path d="M22 9v9M20 12l2-3 2 3" fill="none" stroke="#c11" stroke-width="1.400"/></symbol>
    <symbol id="ocube" viewBox="0 0 24 24"><path d="M1 6l11-5 11 5v12l-11 5-11-5z" fill="url(#gOr)" stroke="#d04a00"/><path d="M1 6l11 5 11-5M12 11v12" fill="none" stroke="#d04a00"/></symbol>
    <symbol id="back" viewBox="0 0 24 24"><path d="M1 14l8-7v4c6 0 9-1 8-7 8 3 8 13-1 14H9v4z" fill="#239a9a"/><path d="M17 4c8 3 8 13-1 14 3-3 4-8 1-14z" fill="#15609a"/></symbol>
</svg>

<header class="titlebar">
    <span class="logo">NX</span>
    <span class="sep"></span>
    <button class="qa" aria-label="保存"><svg><use href="#save"/></svg></button>
    <span class="sep"></span>
    <button class="qa" aria-label="撤销"><svg><use href="#undo"/></svg></button>
    <button class="drop" aria-label="撤销列表"><i class="caret"></i></button>
    <span class="sep"></span>
    <button class="qa clipb" aria-label="剪切"><svg><use href="#cut"/></svg></button>
    <button class="qa clipb" aria-label="复制"><svg><use href="#copy"/></svg></button>
    <button class="qa clipb" aria-label="粘贴"><svg><use href="#paste"/></svg></button>
    <span class="sep"></span>
    <button class="qa" aria-label="毛坯"><svg><use href="#blank"/></svg></button>
    <button class="drop" aria-label="毛坯列表"><i class="caret"></i></button>
    <span class="sep"></span>
    <button class="qa" aria-label="格式刷"><svg><use href="#brush"/></svg></button>
    <span class="sep"></span>
    <button class="qa text off"><svg><use href="#switch"/></svg>切换窗口</button>
    <button class="qa text"><svg><use href="#window"/></svg>窗口<i class="caret"></i></button>
    <button class="custom" aria-label="自定义"><i class="caret"></i></button>
    <h1>NX 12.0.0.27 - 加工</h1>
    <span class="brand">SIEMENS</span>
    <div class="winbtns">
        <button aria-label="最小化"><svg viewBox="0 0 12 12"><path d="M2 10h8" stroke="#444" stroke-width="2"/></svg></button>
        <button aria-label="还原"><svg viewBox="0 0 12 12"><path d="M4 4V1h7v5H8M1 5h7v5H1z" fill="none" stroke="#444" stroke-width="1.500"/></svg></button>
        <button aria-label="关闭"><svg viewBox="0 0 12 12"><path d="M1 1l10 10M11 1L1 11" stroke="#444" stroke-width="2"/></svg></button>
    </div>
</header>

<nav class="tabs">
    <button class="file">文件(F)</button>
    <button>主页</button>
    <button>装配</button>
    <button>曲线</button>
    <button>分析</button>
    <button>视图</button>
    <button>渲染</button>
    <button>工具</button>
    <button>PMI</button>
    <button>应用模块</button>
    <button>开发人员</button>
    <button>内部</button>
    <button class="active">模圣软件</button>
    <button>模圣设计</button>
    <div class="tools">
        <div class="search"><input type="text" placeholder="查找命令" aria-label="查找命令"><svg><use href="#search"/></svg></div>
        <button aria-label="全屏"><svg><use href="#frame"/></svg></button>
        <button aria-label="最小化功能区"><svg viewBox="0 0 16 16"><path d="M2 9l6-6 6 6M2 14l6-6 6 6" fill="none" stroke="#333" stroke-width="1.500"/></svg></button>
        <button class="help" aria-label="帮助">?</button>
        <button class="learn"><svg><use href="#cap"/></svg>教程</button>
    </div>
</nav>

<section class="ribbon">
    <button class="bigmenu"><svg><use href="#menuico"/></svg>菜单<i class="caret"></i></button>

    <div class="group">
        <div class="cmds">
            <div class="col two">
                <button class="cmd"><svg><use href="#auto1"/></svg>电极自动编程</button>
                <button class="cmd"><svg><use href="#auto2"/></svg>零件自动编程</button>
            </div>
            <div class="col">
                <button class="cmd"><svg><use href="#help1"/></svg>加工助手</button>
                <button class="cmd"><svg><use href="#def"/></svg>透明助手</button>
                <button class="cmd"><svg><use href="#tools"/></svg>ONT助手</button>
            </div>
            <div class="col">
                <button class="cmd"><svg><use href="#prog"/></svg>程序组</button>
                <button class="cmd"><svg><use href="#blank"/></svg>毛坯几何体<i class="caret"></i></button>
                <button class="cmd"><svg><use href="#layers"/></svg>切削层</button>
            </div>
            <div class="col">
                <button class="cmd"><svg><use href="#noncut"/></svg>非切削移动</button>
                <button class="cmd"><svg><use href="#plunge"/></svg>进刀点</button>
                <button class="cmd"><svg><use href="#path"/></svg>刀轨转曲线</button>
            </div>
            <div class="col">
                <button class="cmd"><svg><use href="#free"/></svg>自由平面铣</button>
                <button class="cmd"><svg><use href="#edit"/></svg>编辑刀轨</button>
                <button class="cmd"><svg><use href="#post"/></svg>后处理</button>
            </div>
            <button class="more"><span><svg><use href="#cutter"/></svg></span>更多<i class="caret"></i></button>
        </div>
        <div class="gtitle"><b>常规</b><i class="caret"></i></div>
    </div>

    <div class="group">
        <div class="cmds">
            <div class="col two">
                <button class="cmd"><svg><use href="#tiles"/></svg>超级工具栏</button>
                <button class="cmd"><svg><use href="#orient"/></svg>定向</button>
            </div>
            <div class="col">
                <button class="cmd"><svg><use href="#align"/></svg>摆正体</button>
                <button class="cmd"><svg><use href="#three"/></svg>三面定向</button>
                <button class="cmd"><svg><use href="#region"/></svg>区域保护</button>
            </div>
            <div class="col">
                <button class="cmd"><svg><use href="#rmparam"/></svg>移除参数</button>
                <button class="cmd"><svg><use href="#split"/></svg>拆分体</button>
                <button class="cmd"><svg><use href="#impexp"/></svg>导入/导出</button>
            </div>
            <div class="col">
                <button class="cmd"><svg><use href="#layset"/></svg>图层设置</button>
                <button class="cmd"><svg><use href="#delface"/></svg>删除面</button>
                <button class="cmd"><svg><use href="#fillet"/></svg>圆角/斜角</button>
            </div>
            <div class="col">
                <button class="cmd"><svg><use href="#outline"/></svg>部件轮廓</button>
                <button class="cmd"><svg><use href="#water"/></svg>检查水路</button>
                <button class="cmd"><svg><use href="#autofit"/></svg>自动拼料</button>
            </div>
            <button class="more"><span><svg><use href="#stamp"/></svg></span>更多<i class="caret"></i></button>
        </div>
        <div class="gtitle"><b>建模</b><i class="caret"></i></div>
    </div>

    <div class="group">
        <div class="cmds">
            <button class="large"><svg><use href="#model"/></svg>模型分析</button>
            <div class="col icons">
                <button aria-label="重量"><i class="kg">kg</i></button>
                <button aria-label="体"><svg><use href="#cubedot"/></svg></button>
                <button aria-label="包容体"><svg><use href="#cubeg"/></svg></button>
            </div>
            <div class="col icons">
                <button aria-label="干涉"><svg><use href="#balls"/></svg></button>
                <button aria-label="半径"><svg><use href="#gauge"/></svg></button>
                <button aria-label="拔模"><svg><use href="#split3"/></svg></button>
            </div>
            <button class="more"><span><svg><use href="#ruler"/></svg></span>更多<i class="caret"></i></button>
        </div>
        <div class="gtitle"><b>分析</b><i class="caret"></i></div>
    </div>

    <div class="group narrow">
        <div class="cmds">
            <div class="col two bigicons">
                <button aria-label="电极"><svg><use href="#holder"/></svg></button>
                <button aria-label="基座"><svg><use href="#block"/></svg></button>
            </div>
            <div class="col icons">
                <button aria-label="标注"><svg><use href="#plana"/></svg></button>
                <button aria-label="截面"><svg><use href="#section"/></svg></button>
                <button aria-label="编辑"><svg><use href="#pencil"/></svg></button>
            </div>
            <div class="col icons">
                <button aria-label="图纸"><svg><use href="#cards"/></svg></button>
                <button aria-label="装夹"><svg><use href="#holder2"/></svg></button>
                <button aria-label="复制"><svg><use href="#boxes"/></svg></button>
            </div>
        </div>
        <div class="gtitle"><b>电极工具</b><i class="caret"></i></div>
    </div>

    <div class="group narrow">
        <div class="cmds">
            <div class="col two bigicons">
                <button aria-label="出图"><svg><use href="#sheet"/></svg></button>
                <button aria-label="表格"><svg><use href="#grid"/></svg></button>
            </div>
        </div>
        <div class="gtitle"><b>电...</b><i class="caret"></i></div>
    </div>

    <div class="group narrow">
        <div class="cmds">
            <button class="large"><svg><use href="#pref"/></svg>首选项</button>
            <div class="col icons">
                <button aria-label="导入"><svg><use href="#clip"/></svg></button>
                <button aria-label="锁定"><svg><use href="#lock"/></svg></button>
                <button aria-label="系统帮助"><i class="help gray">?</i></button>
            </div>
        </div>
        <div class="gtitle"><b>系统</b><i class="caret"></i></div>
    </div>

    <div class="group narrow">
        <div class="cmds"><button class="large"><svg><use href="#home"/></svg>关于模圣</button></div>
        <div class="gtitle"><b>关于</b><i class="caret"></i></div>
    </div>

    <div class="group narrow">
        <div class="cmds"><button class="large"><svg><use href="#up"/></svg>更新工具</button></div>
        <div class="gtitle"><b>更新</b><i class="caret"></i></div>
    </div>
    <button class="overflow" aria-label="功能区选项"><i class="caret"></i></button>
</section>

<section class="selbar">
    <button class="menu"><svg><use href="#menuico"/></svg><span>菜单(<u>M</u>)</span><i class="caret"></i></button>
    <span class="sep"></span>
    <div class="set pad">
        <button aria-label="类选择"><svg><use href="#filt"/></svg></button>
        <button aria-label="工序过滤"><svg><use href="#filt4"/></svg></button>
        <button aria-label="体过滤"><svg><use href="#filt3"/></svg></button>
        <button aria-label="刀具过滤"><svg><use href="#filt2"/></svg></button>
    </div>
    <span class="sep"></span>
    <div class="set pad">
        <button aria-label="刀轨过滤"><svg><use href="#toolf"/></svg></button>
        <button aria-label="几何过滤"><svg><use href="#filt3"/></svg></button>
    </div>
    <span class="sep"></span>
    <div class="combo s1"><select aria-label="选择过滤器"><option>无选择过滤器</option></select><i class="caret big"></i></div>
    <div class="combo"><select aria-label="选择范围"><option>仅在工作部件内</option></select><i class="caret big"></i></div>
    <div class="set mid">
        <button aria-label="选择"><svg><use href="#selall"/></svg></button>
        <button aria-label="重置过滤器"><svg><use href="#funnel"/></svg></button>
        <button aria-label="取消选择"><svg><use href="#no"/></svg></button>
        <button aria-label="体"><svg><use href="#cubeg"/></svg></button>
        <button aria-label="面"><svg><use href="#face"/></svg></button>
        <button aria-label="边"><svg><use href="#cubew"/></svg></button>
        <button aria-label="特征"><svg><use href="#cubew"/></svg></button>
        <button aria-label="曲线"><svg><use href="#curve"/></svg></button>
        <button aria-label="点"><svg><use href="#pluses"/></svg></button>
        <button aria-label="捕捉"><svg><use href="#snap"/></svg></button>
        <button class="drop" aria-label="捕捉列表"><i class="caret"></i></button>
        <button aria-label="返回捕捉"><svg><use href="#snap2"/></svg></button>
        <button aria-label="装配过滤"><svg><use href="#filt3"/></svg></button>
        <button aria-label="平面"><svg><use href="#bars"/></svg></button>
        <button aria-label="中心点"><svg><use href="#hex"/></svg></button>
        <button aria-label="隐藏边"><svg><use href="#dotcube"/></svg></button>
        <button aria-label="矩形选择"><svg><use href="#marq"/></svg></button>
        <button class="drop" aria-label="矩形列表"><i class="caret"></i></button>
        <button aria-label="着色"><svg><use href="#shaded"/></svg></button>
        <button aria-label="高亮"><svg><use href="#redcube"/></svg></button>
    </div>
    <div class="combo"><select aria-label="体类型"><option>单个体</option></select><i class="caret big"></i></div>
    <div class="set"><button class="go" aria-label="继续"><svg><use href="#arrow"/></svg></button></div>
    <span class="sep"></span>
    <div class="set view">
        <button aria-label="适合窗口"><svg><use href="#fit"/></svg></button>
        <button aria-label="平移"><svg><use href="#pan"/></svg></button>
        <button aria-label="旋转"><svg><use href="#rotate"/></svg></button>
        <button aria-label="透视"><svg><use href="#persp"/></svg></button>
        <button aria-label="布局"><svg><use href="#grayd"/></svg></button>
        <button aria-label="定向视图"><svg><use href="#layout4"/></svg></button>
        <button class="drop" aria-label="视图列表"><i class="caret"></i></button>
        <button aria-label="截面"><svg><use href="#lshape"/></svg></button>
        <button class="drop" aria-label="截面列表"><i class="caret"></i></button>
        <button aria-label="渲染样式"><svg><use href="#bcube"/></svg></button>
        <button class="drop" aria-label="样式列表"><i class="caret"></i></button>
        <button aria-label="裁剪"><svg><use href="#clipv"/></svg></button>
        <button class="drop" aria-label="裁剪列表"><i class="caret"></i></button>
    </div>
    <span class="sep"></span>
    <button class="overflow" aria-label="工具条选项"><i class="caret"></i></button>
</section>

<main>
    <aside class="resbar">
        <button class="first" aria-label="设置"><svg><use href="#gear"/></svg></button>
        <button aria-label="装配导航器"><svg><use href="#r1"/></svg></button>
        <button aria-label="约束导航器"><svg><use href="#r2"/></svg></button>
        <button aria-label="部件导航器"><svg><use href="#r3"/></svg></button>
        <button class="on" aria-label="工序导航器"><svg><use href="#r4"/></svg></button>
        <button aria-label="加工特征"><svg><use href="#r5"/></svg></button>
        <button aria-label="机床导航器"><svg><use href="#r6"/></svg></button>
        <button aria-label="重用库"><svg><use href="#r7"/></svg></button>
        <button class="eye" aria-label="视图"><svg><use href="#r8"/></svg></button>
        <button class="tall" aria-label="信息"><svg><use href="#r9"/></svg></button>
        <button class="tall" aria-label="浏览器"><svg><use href="#r10"/></svg></button>
        <button class="last" aria-label="历史"><svg><use href="#r11"/></svg></button>
        <button aria-label="材料"><svg><use href="#r12"/></svg></button>
        <button aria-label="加工向导"><svg><use href="#r13"/></svg></button>
        <button aria-label="角色"><svg><use href="#r14"/></svg></button>
    </aside>

    <aside class="navigator">
        <h2>工序导航器 - 几何<button aria-label="最大化"></button></h2>
        <div class="tree">
            <table>
                <thead><tr><th>名称</th><th>刀轨</th></tr></thead>
                <tbody>
                    <tr><td><div class="lv0">GEOMETRY</div></td><td></td></tr>
                    <tr><td><div class="lv1"><svg><use href="#t1"/></svg><span>未用项</span></div></td><td></td></tr>
                    <tr><td><div class="lv1"><svg><use href="#t2"/></svg><span>MCS_MILL</span></div></td><td></td></tr>
                    <tr class="sel"><td><div class="lv2"><svg><use href="#t3"/></svg><span>WORKPIECE</span></div></td><td></td></tr>
                    <tr><td><div class="lv3"><svg><use href="#t4"/></svg><svg><use href="#t5"/></svg><span>CAVITY_MILL</span></div></td><td><svg viewBox="0 0 16 16"><path d="M1 2l13 13M14 1L2 15" stroke="#111" stroke-width="2.500"/></svg></td></tr>
                    <tr><td><div class="lv2"><svg><use href="#t6"/></svg><span>MILL_BND</span></div></td><td></td></tr>
                </tbody>
            </table>
            <svg class="lines" viewBox="0 0 60 120">
                <path d="M10.500 31v16M11 30.500h9M15 50.500h5M29.500 60v46M34 70.500h4M30 110.500h9M48.500 80v10M49 90.500h9" fill="none" stroke="#888" stroke-dasharray="1 1"/>
                <path d="M6.500 46.500h8v8h-8zM25.500 66.500h8v8h-8z" fill="#fff" stroke="#bbb"/>
                <path d="M8 50.500h5M27 70.500h5" stroke="#222"/>
            </svg>
            <div class="filler"></div>
            <div class="hscroll"><i class="l"></i><span>III</span><i class="r"></i></div>
        </div>
        <div class="splitter"></div>
        <button class="fold">相关性<svg viewBox="0 0 12 10"><path d="M1 1l5 7 5-7" fill="none" stroke="#1b6c86" stroke-width="2.500"/></svg></button>
        <button class="fold">细节<svg viewBox="0 0 12 10"><path d="M1 1l5 7 5-7" fill="none" stroke="#1b6c86" stroke-width="2.500"/></svg></button>
    </aside>

    <section class="view3d">
        <div class="doctabs">
            <button class="doc"><svg><use href="#cutter"/></svg>MSTEST52.prt<svg class="mod" viewBox="0 0 12 12"><path d="M9 4V1H1v10h8V9M5 8l6-3-1 4z" fill="none" stroke="#fff" stroke-width="1.600"/></svg><svg class="x" viewBox="0 0 12 12"><path d="M2 2l8 8M10 2l-8 8" stroke="#b5c9d0" stroke-width="2.400"/></svg></button>
        </div>
        <div class="canvas">
            <svg class="part" viewBox="0 0 1500 1320">
                <defs>
                    <linearGradient id="bore" x1="0" x2="1"><stop offset="0" stop-color="#8a5a2a"/><stop offset=".25" stop-color="#845428"/><stop offset=".5" stop-color="#54341a"/><stop offset="1" stop-color="#a87438"/></linearGradient>
                    <g id="hole"><ellipse rx="13" ry="9" fill="#f5b04e" stroke="#f09a42" stroke-width="5"/><ellipse rx="8" ry="6" fill="#6a4320"/></g>
                    <g id="dot"><ellipse rx="9" ry="6" fill="#f5b04e" stroke="#f09a42" stroke-width="4"/><circle r="3" fill="#8a5020"/></g>
                    <g id="boss"><ellipse rx="32" ry="23" fill="#ffcb5a" stroke="#f09a42" stroke-width="5"/><path d="M-24 2c0-20 48-20 48 0" fill="none" stroke="#f09a42" stroke-width="8"/><ellipse cy="6" rx="17" ry="11" fill="#ffd564" stroke="#f09a42" stroke-width="4"/><ellipse cy="7" rx="8" ry="6" fill="#6a4320"/></g>
                    <g id="bighole"><ellipse rx="66" ry="46" fill="url(#bore)" stroke="#f09a42" stroke-width="7"/></g>
                </defs>
                <g stroke="#f09a42" stroke-width="7" stroke-linejoin="round">
                    <path d="M1450 410V655L932 1272V1025L1055 893V925L1090 908L1300 655V640L1330 605V555z" fill="#b57634"/>
                    <path d="M55 660L932 1025V1272L52 902z" fill="#845428"/>
                    <path d="M573 42L1450 410L1330 555V605L1300 655L1085 908L1055 925V893L932 1025L55 660L222 462L280 460L380 348V303L408 275V240z" fill="#ffd564"/>
                </g>
                <g stroke="#f09a42" stroke-width="6" stroke-linejoin="round">
                    <!-- rear-left steps -->
                    <path d="M410 250L523 296V320L410 275z" fill="#845428"/>
                    <path d="M523 296C540 302 558 300 562 290L595 258V290L562 320Q540 330 525 318z" fill="url(#bore)"/>
                    <path d="M595 258Q610 245 625 254L665 268V306L625 290L595 294z" fill="#845428"/>
                    <path d="M622 256v34" fill="none"/>
                    <path d="M380 312L520 370V380L582 408V432L380 345z" fill="#845428"/>
                    <path d="M520 370L598 293L650 314L645 340L585 408L520 382z" fill="#ffd564"/>
                    <path d="M585 410L648 338V410L465 638L432 625L580 436z" fill="#b57634"/>
                    <path d="M408 242L523 290Q548 300 562 286L590 262Q600 244 622 250L672 268" fill="none"/>
                    <!-- pocket walls -->
                    <path d="M648 330L670 306V268Q700 272 708 288V398Q690 380 665 384Q650 388 648 408z" fill="url(#bore)"/>
                    <path d="M708 286L1088 446V556L708 396z" fill="#845428"/>
                    <path d="M1088 446Q1120 446 1126 462V520L1088 556z" fill="url(#bore)"/>
                    <path d="M1128 482L1228 520V552L1128 516z" fill="#845428"/>
                    <path d="M1228 520L1260 526V570L1228 555z" fill="url(#bore)"/>
                    <path d="M1262 540L1322 560V598L1262 575z" fill="#845428"/>
                    <path d="M1126 524L1326 606L1300 640L1092 552z" fill="#ffd564"/>
                    <path d="M1092 560L1300 642" stroke="#6a4220" stroke-width="9"/>
                    <path d="M1088 566L1298 652M1085 570L885 803M1330 556V604" fill="none"/>
                    <!-- front-left island -->
                    <path d="M222 462L345 505Q366 520 358 545L325 575Q330 592 345 592L400 628L440 632" fill="none"/>
                    <path d="M245 458L390 516L365 560L350 592L325 580L358 548Q362 520 345 505" fill="#ffd564"/>
                    <path d="M330 575L362 556V580L352 594z" fill="#b57634"/>
                    <path d="M352 592L398 530L458 556V585L415 628z" fill="#ffd564"/>
                    <path d="M458 580L462 560L580 436M460 585L432 626" fill="none"/>
                    <path d="M420 628L790 775Q805 805 830 803Q848 795 858 797L890 805L975 850L1080 890" fill="none"/>
                    <path d="M78 650l10-12M80 660l20 4M90 645l-4 14" fill="none"/>
                </g>
                <path d="M386 440q-22 16 0 32l50 18q30 4 26-20-6-12-22-18l-34-12q-12-4-20 0z" fill="url(#bore)" stroke="#f09a42" stroke-width="7"/>
                <path d="M413 445v38" stroke="#f09a42" stroke-width="6"/>
                <use href="#bighole" x="610" y="145"/><use href="#bighole" x="1306" y="438"/><use href="#bighole" x="205" y="637"/><use href="#bighole" x="894" y="927"/>
                <ellipse cx="519" cy="238" rx="27" ry="18" fill="url(#bore)" stroke="#f09a42" stroke-width="6"/>
                <ellipse cx="270" cy="534" rx="27" ry="18" fill="url(#bore)" stroke="#f09a42" stroke-width="6"/>
                <use href="#boss" x="740" y="238"/><use href="#boss" x="1130" y="402"/><use href="#boss" x="375" y="671"/><use href="#boss" x="765" y="835"/>
                <use href="#hole" x="492" y="430"/><use href="#hole" x="744" y="451"/><use href="#hole" x="1005" y="560"/><use href="#hole" x="1105" y="606"/>
                <use href="#hole" x="670" y="550"/><use href="#hole" x="630" y="600"/><use href="#hole" x="588" y="647"/><use href="#hole" x="784" y="605"/>
                <use href="#hole" x="802" y="639"/><use href="#hole" x="805" y="677"/><use href="#hole" x="704" y="699"/><use href="#hole" x="756" y="693"/>
                <use href="#hole" x="756" y="734"/><use href="#hole" x="720" y="744"/><use href="#hole" x="792" y="773"/><use href="#hole" x="855" y="765"/>
                <use href="#hole" x="885" y="729"/><use href="#hole" x="915" y="693"/><use href="#hole" x="946" y="657"/><use href="#hole" x="933" y="811"/>
                <use href="#hole" x="852" y="618"/><use href="#dot" x="850" y="686"/><use href="#dot" x="811" y="733"/><use href="#dot" x="848" y="727"/>
                <use href="#dot" x="875" y="655"/><use href="#dot" x="910" y="652"/><use href="#dot" x="930" y="629"/><use href="#dot" x="736" y="632"/>
                <use href="#dot" x="715" y="655"/><use href="#dot" x="751" y="756"/><use href="#dot" x="1144" y="762"/><use href="#dot" x="880" y="597"/>
                <use href="#dot" x="426" y="307"/><use href="#dot" x="493" y="336"/><use href="#dot" x="612" y="321"/><use href="#dot" x="563" y="380"/>
                <use href="#dot" x="408" y="528"/><use href="#dot" x="410" y="561"/><use href="#dot" x="1128" y="545"/><use href="#dot" x="1283" y="608"/>
                <g fill="#ffd564" stroke="#f09a42" stroke-width="7"><ellipse cx="442" cy="982" rx="16" ry="14"/><ellipse cx="541" cy="1024" rx="16" ry="14"/><ellipse cx="1192" cy="839" rx="13" ry="25" transform="rotate(20 1192 839)"/></g>
                <path d="M430 972l14 10M529 1014l14 10M1190 832l8-16" stroke="#845428" stroke-width="7"/>
                <!-- coordinate systems -->
                <path d="M753 536V340" stroke="#0f2a9c" stroke-width="7"/><path d="M753 316l10 48h-20zM753 425l8 45-8 60-8-60z" fill="#0f2a9c"/>
                <path d="M753 536L895 370" stroke="#22a42c" stroke-width="6"/><path d="M911 349l-18 42-21-14zM833 442l-10 26-54 52 36-62z" fill="#22a42c"/>
                <path d="M753 538L985 632" stroke="#cc2428" stroke-width="5"/><path d="M1018 648l-56-12 6-20zM886 592l-40-8-58-30 64 16z" fill="#cc2428"/>
                <g font-family="Liberation Sans" font-size="38">
                    <g fill="#2a36e0"><text x="695" y="312">ZM</text><text x="698" y="414">ZC</text></g>
                    <g fill="#2aa030"><text x="851" y="338">YM</text><text x="784" y="425">YC</text></g>
                    <g fill="#cc3030"><text x="850" y="642">XC</text><text x="970" y="693">XM</text></g>
                </g>
            </svg>

            <svg class="triad" viewBox="0 0 50 60">
                <path d="M13 11l12-7 18 7v17l-12 10-18-7z" fill="#e3e3e3" stroke="#bbb"/>
                <path d="M13 17l18 5 12-11M31 22v16M25 4v16l18 8M25 20l-12 11" fill="none" stroke="#bbb"/>
                <path d="M10 33l18-20" stroke="#9bd0a0" stroke-width="2"/>
                <path d="M9 34V14" stroke="#0f2a9c" stroke-width="2"/><path d="M9 9l3 8H6z" fill="#0f2a9c"/>
                <path d="M9 34l24 10" stroke="#cc2428" stroke-width="3"/><path d="M41 47l-11-1 3-6z" fill="#cc2428"/>
                <circle cx="9" cy="34" r="4" fill="#ccc" stroke="#888"/>
                <g font-family="Liberation Sans" font-size="12"><text x="5" y="8" fill="#3344ee">Z</text><text x="26" y="11" fill="#3a9a40">Y</text><text x="41" y="54" fill="#dd3333">X</text></g>
            </svg>

            <form class="dialog">
                <header><svg><use href="#gear"/></svg><h3>毛坯几何体</h3>
                    <button type="button" aria-label="重置"><svg viewBox="0 0 14 14"><path d="M3 4c-3 5 1 9 5 8 6-2 5-9 0-10" fill="none" stroke="#fff" stroke-width="2"/><path d="M1 7l1-5 4 3z" fill="#fff"/></svg></button>
                    <button type="button" aria-label="关闭"><svg viewBox="0 0 14 14"><path d="M2 2l10 10M12 2L2 12" stroke="#fff" stroke-width="2"/></svg></button>
                </header>

                <section>
                    <h4>类型<svg viewBox="0 0 12 10"><path d="M1 9l5-7 5 7" fill="none" stroke="#1b6c86" stroke-width="2.500"/></svg></h4>
                    <div class="types">
                        <button type="button" aria-label="自动"><svg><use href="#d1"/></svg></button>
                        <button type="button" class="on" aria-label="包容块"><svg><use href="#bcube"/></svg></button>
                        <button type="button" aria-label="包容圆柱"><svg><use href="#d3"/></svg></button>
                        <button type="button" aria-label="偏置"><svg><use href="#d4"/></svg></button>
                        <label><input type="checkbox" checked>指定部件</label>
                    </div>
                    <div class="pick"><span><svg viewBox="0 0 14 14"><path d="M1 7l3-1 2 3 6-8 1 2-7 10z" fill="#2fc22f" stroke="#0a8a0a"/></svg>指定部件 (1)</span><button type="button" aria-label="选择部件"><svg><use href="#ocube"/></svg></button></div>
                </section>

                <section>
                    <h4>大小<svg viewBox="0 0 12 10"><path d="M1 9l5-7 5 7" fill="none" stroke="#1b6c86" stroke-width="2.500"/></svg></h4>
                    <div class="fields">
                        <div class="row"><label for="len">长度</label><input class="marked" id="len" type="text" value="270.0000"></div>
                        <div class="row"><label for="wid">宽度</label><input id="wid" type="text" value="270.0000"></div>
                        <div class="row"><label for="hei">高度</label><input id="hei" type="text" value="90.0000"></div>
                        <div class="row"><span>重置</span><button type="button" class="reset" aria-label="重置大小"><svg><use href="#back"/></svg></button></div>
                    </div>
                </section>

                <section>
                    <h4 class="hover">限制<svg viewBox="0 0 12 10"><path d="M1 9l5-7 5 7" fill="none" stroke="#1b6c86" stroke-width="2.500"/></svg></h4>
                    <div class="fields limits">
                        <div class="row"><label for="xm0">XM-</label><input id="xm0" type="text" value="0.0000"><label for="xm1">XM+</label><input id="xm1" type="text" value="0.0000"></div>
                        <div class="row"><label for="ym0">YM-</label><input id="ym0" type="text" value="0.0000"><label for="ym1">YM+</label><input id="ym1" type="text" value="0.0000"></div>
                        <div class="row"><label for="zm0">ZM-</label><input id="zm0" type="text" value="0.0000"><label for="zm1">ZM+</label><input id="zm1" type="text" value="0.0000"></div>
                    </div>
                </section>

                <section>
                    <h4>警告<svg viewBox="0 0 12 10"><path d="M1 9l5-7 5 7" fill="none" stroke="#1b6c86" stroke-width="2.500"/></svg></h4>
                    <p>该工具用于对选择的Workpiece设置毛坯</p>
                </section>

                <footer>
                    <button type="button" class="ok">确定</button>
                    <button type="button">应用</button>
                    <button type="button">取消</button>
                </footer>
            </form>

            <svg class="cursor" viewBox="0 0 20 24"><path d="M5 2c0-2 3-2 3 0v7l1-1c1-1 2 0 2 1 1-1 3-1 3 1 1-1 3 0 3 1v6c0 3-2 5-4 6H7c-2-3-4-5-6-8 0-2 2-3 4 0z" fill="#fff" stroke="#111" stroke-width="1.200"/></svg>
        </div>
    </section>
</main>

<footer class="status">
    <span>选择体</span>
    <span>实体 已选定</span>
    <button aria-label="全屏显示"><svg><use href="#frame"/></svg></button>
</footer>

</body>
</html>
```

FILE: styles.css
```css
* {
    box-sizing: border-box;
}

body {
    margin: 0;
    height: 100vh;
    display: flex;
    flex-direction: column;
    overflow: hidden;
    background: #fff;
    color: #1a1a1a;
    font-family: "Open Sans", "Noto Sans CJK SC", sans-serif;
    font-size: 12px;
    line-height: 18px;
}

button {
    border: 0;
    padding: 0;
    background: none;
    font: inherit;
    color: inherit;
    display: flex;
    align-items: center;
    justify-content: center;
    white-space: nowrap;
    flex: none;
}

h1, h2, h3, h4, p {
    margin: 0;
    font-weight: normal;
}

svg {
    flex: none;
    width: 16px;
    height: 16px;
}

.sprite {
    position: absolute;
    width: 0;
    height: 0;
}

.caret {
    flex: none;
    width: 0;
    height: 0;
    border: 3px solid transparent;
    border-top: 4px solid #111;
    border-bottom: 0;
}

.caret.big {
    border-width: 4px;
    border-top-width: 5px;
    border-bottom: 0;
}

.sep {
    flex: none;
    width: 1px;
    background: #d5d5d5;
}

.help {
    width: 14px;
    height: 14px;
    border-radius: 50%;
    background: #3b63c4;
    color: #fff;
    font: bold 11px/14px "Liberation Sans", sans-serif;
    text-align: center;
}

.help.gray {
    background: #bdbdbd;
}

.kg {
    width: 16px;
    height: 16px;
    border: 1px solid #a5a5a5;
    color: #999;
    font: 11px/12px "Liberation Sans", sans-serif;
    text-align: center;
}

/* title bar */
.titlebar {
    height: 28px;
    flex: none;
    display: flex;
    align-items: center;
}

.titlebar .sep {
    height: 20px;
}

.logo {
    width: 43px;
    padding-left: 3px;
    font: bold 23px/28px "Liberation Sans", sans-serif;
    color: #81969f;
}

.qa {
    width: 28px;
}

.qa svg {
    width: 18px;
    height: 18px;
}

.qa.clipb {
    width: 25px;
}

.titlebar .drop {
    width: 12px;
    height: 20px;
}

.qa.text {
    width: auto;
    margin-left: 5px;
    gap: 4px;
}

.off {
    color: #b5b5b5;
}

.custom {
    margin-left: 5px;
    border-top: 1px solid #111;
    padding-top: 2px;
}

.titlebar h1 {
    flex: 1;
    text-align: center;
    font-size: 14px;
}

.brand {
    font: bold 14px/20px "Liberation Sans", sans-serif;
    color: #149494;
    padding: 3px 24px 0 0;
}

.winbtns {
    display: flex;
    gap: 11px;
    padding-right: 8px;
}

.winbtns svg {
    width: 12px;
    height: 12px;
}

/* tabs */
.tabs {
    height: 29px;
    flex: none;
    display: flex;
    background: #dadada;
    font-size: 14px;
}

.tabs > button {
    min-width: 54px;
    padding: 0 13px;
}

.tabs .file {
    width: 85px;
    margin-right: 2px;
    padding: 0 4px 0 0;
    background: #57a0b7;
    color: #fff;
}

.tabs .active {
    background: #fff;
    border-top: 1px solid #87b3c0;
    color: #15647f;
}

.tools {
    margin-left: auto;
    display: flex;
    align-items: center;
    gap: 11px;
    padding-right: 8px;
    font-size: 12px;
}

.search {
    width: 140px;
    height: 21px;
    display: flex;
    align-items: center;
    padding: 0 3px 0 1px;
    border: 1px solid #999;
    background: #fff;
}

.search input {
    flex: 1;
    min-width: 0;
    border: 0;
    padding: 0;
    font: inherit;
}

.search input::placeholder {
    color: #aaa;
}

.learn {
    gap: 4px;
}

/* ribbon */
.ribbon {
    height: 97px;
    flex: none;
    display: flex;
    padding-top: 2px;
    border-bottom: 1px solid #d5d5d5;
}

.bigmenu {
    width: 50px;
    flex-direction: column;
    justify-content: flex-start;
    padding-top: 6px;
    line-height: 22px;
}

.bigmenu svg {
    width: 32px;
    height: 28px;
    margin-bottom: 3px;
}

.bigmenu .caret {
    margin-top: 2px;
}

.group {
    margin-bottom: 4px;
    padding: 0 4px 0 12px;
    border-right: 1px solid #d5d5d5;
}

.group.narrow {
    padding-right: 10px;
}

.bigmenu + .group {
    border-left: 1px solid #d5d5d5;
}

.cmds {
    display: flex;
    gap: 8px;
    height: 74px;
    color: #b8b8b8;
}

.col {
    display: flex;
    flex-direction: column;
}

.cmd {
    height: 23px;
    gap: 3px;
    justify-content: flex-start;
}

.cmd svg {
    width: 18px;
    height: 18px;
}

.cmd .caret {
    margin-left: 4px;
}

.two .cmd {
    height: 36px;
    gap: 4px;
}

.two .cmd svg {
    width: 24px;
    height: 24px;
}

.more {
    width: 38px;
    margin-left: 3px;
    flex-direction: column;
    justify-content: flex-start;
    padding-top: 2px;
    color: #1a1a1a;
    line-height: 22px;
}

.more span {
    width: 38px;
    height: 35px;
    display: flex;
    align-items: center;
    justify-content: center;
    border: 1px solid #ddd;
    border-radius: 4px;
}

.more .caret {
    margin-top: 2px;
}

.large {
    flex-direction: column;
    justify-content: flex-start;
    padding-top: 4px;
    line-height: 22px;
}

.large svg {
    width: 32px;
    height: 30px;
    margin-bottom: 3px;
}

.icons button {
    width: 18px;
    height: 23px;
}

.icons svg {
    width: 18px;
    height: 18px;
}

.bigicons button {
    width: 24px;
    height: 36px;
}

.bigicons svg {
    width: 24px;
    height: 24px;
}

.gtitle {
    display: flex;
    align-items: center;
    height: 18px;
    margin-left: -12px;
    padding-right: 4px;
    color: #15647f;
}

.narrow .gtitle {
    margin-right: -4px;
}

.gtitle b {
    flex: 1;
    text-align: center;
    font-weight: normal;
}

.overflow {
    margin-left: auto;
    padding: 0 6px 8px 0;
    align-self: flex-end;
}

/* selection bar */
.selbar {
    height: 33px;
    flex: none;
    display: flex;
    align-items: center;
    border-bottom: 1px solid #8a8a8a;
}

.selbar .sep {
    height: 24px;
}

.selbar .menu {
    width: 89px;
    padding-left: 6px;
    gap: 4px;
}

.selbar .menu span {
    font-size: 13px;
}

.selbar .menu svg {
    width: 16px;
    height: 14px;
}

.set {
    display: flex;
}

.set button {
    width: 25px;
    height: 20px;
}

.set .drop {
    width: 12px;
}

.set .go {
    width: 34px;
}

.set.pad {
    padding: 0 6px 0 8px;
}

.set.mid {
    padding: 0 2px 0 5px;
}

.set.view {
    padding: 0 8px;
}

.combo {
    position: relative;
    width: 156px;
    height: 21px;
}

.combo.s1 {
    width: 148px;
    margin: 0 8px 0 10px;
}

.combo select {
    width: 100%;
    height: 100%;
    appearance: none;
    border: 1px solid #999;
    border-radius: 0;
    background: #fff;
    padding: 0 2px;
    font: inherit;
    color: inherit;
}

.combo .caret {
    position: absolute;
    right: 5px;
    top: 8px;
}

/* work area */
main {
    flex: 1;
    min-height: 0;
    display: flex;
}

.resbar {
    width: 32px;
    flex: none;
    background: #dadada;
    border-right: 1px solid #999;
}

.resbar button {
    width: 32px;
    height: 42px;
    padding-left: 4px;
}

.resbar svg {
    width: 24px;
    height: 24px;
}

.resbar .first {
    height: 26px;
    margin-bottom: 16px;
    padding: 0 2px 0 0;
}

.resbar .first svg {
    width: 14px;
    height: 14px;
}

.resbar .on {
    height: 44px;
    margin: -1px 0 -1px 2px;
    width: 30px;
    padding-left: 2px;
    background: #fff;
    border: 1px solid #999;
    border-right: 0;
}

.resbar .eye {
    margin-bottom: 6px;
}

.resbar .tall {
    height: 54px;
}

.resbar .last {
    height: 50px;
}

.navigator {
    width: 270px;
    flex: none;
    display: flex;
    flex-direction: column;
    padding: 0 9px 6px 6px;
    border-right: 1px solid #8a8a8a;
}

.navigator h2 {
    display: flex;
    align-items: center;
    justify-content: space-between;
    height: 28px;
    padding: 2px 7px 0 4px;
    font-size: 13px;
}

.navigator h2 button {
    width: 12px;
    height: 11px;
    border: 1px solid #111;
    border-top-width: 2px;
}

.tree {
    flex: 1;
    min-height: 0;
    display: flex;
    flex-direction: column;
    position: relative;
    border: 1px solid #d5d5d5;
    padding: 1px;
}

.tree table {
    width: 100%;
    table-layout: fixed;
    border-collapse: collapse;
    font-size: 13px;
}

.tree th {
    height: 20px;
    padding: 0 6px;
    background: #efefef;
    border-bottom: 1px solid #ccc;
    text-align: left;
    font-weight: normal;
    font-size: 12px;
}

.tree th:first-child {
    width: 199px;
    border-right: 1px solid #ccc;
}

.tree td {
    height: 20px;
    padding: 0;
    border-bottom: 1px solid #e8e8e8;
}

.tree td:first-child {
    border-right: 1px solid #000;
}

.tree td:last-child {
    padding-left: 4px;
}

.tree td > svg {
    display: block;
}

.tree tbody tr:nth-child(even) {
    background: #fafafa;
}

.tree td div {
    display: flex;
    align-items: center;
    height: 19px;
}

.tree td span {
    flex: 1;
    padding-left: 3px;
}

.lv0 { padding-left: 3px; }
.lv1 { padding-left: 19px; }
.lv2 { padding-left: 38px; }
.lv3 { padding-left: 57px; }

.lv3 span {
    color: #8fae9f;
}

.tree .sel span,
.tree .sel td:last-child {
    background: #8ec2d1;
}

.lines {
    position: absolute;
    left: 0;
    top: 21px;
    width: 60px;
    height: 120px;
}

.filler {
    flex: 1;
    background:
        linear-gradient(#000, #000) 199px 0 / 1px 100% no-repeat,
        repeating-linear-gradient(#fff 0 19px, #e8e8e8 19px 20px, #fafafa 20px 39px, #e8e8e8 39px 40px);
}

.hscroll {
    height: 16px;
    display: flex;
    align-items: center;
    gap: 9px;
    padding: 0 6px;
    background: #efefef;
}

.hscroll i {
    border: 4px solid transparent;
}

.hscroll .l {
    border-right-color: #333;
    border-left: 0;
}

.hscroll .r {
    border-left-color: #333;
    border-right: 0;
    margin-left: auto;
}

.hscroll span {
    width: 70px;
    height: 15px;
    border: 1px solid #999;
    border-radius: 2px;
    background: linear-gradient(#f6f6f6, #d2d2d2);
    text-align: center;
    font-size: 9px;
    line-height: 13px;
    color: #555;
}

.splitter {
    height: 5px;
    margin-top: 1px;
    background: #dadada;
    border: 1px solid #b5b5b5;
}

.fold {
    height: 25px;
    justify-content: space-between;
    padding: 0 6px 0 7px;
    border-bottom: 2px solid #d0d0d0;
    font-size: 15px;
    color: #15647f;
}

.fold svg {
    width: 12px;
    height: 10px;
}

.view3d {
    flex: 1;
    min-width: 0;
    display: flex;
    flex-direction: column;
    border-right: 1px solid #ccc;
    border-bottom: 1px solid #ddd;
}

.doctabs {
    flex: none;
    display: flex;
    border-bottom: 2px solid #57a0b7;
}

.doc {
    height: 23px;
    padding: 0 6px 0 4px;
    gap: 6px;
    background: #57a0b7;
    color: #fff;
    font-size: 13px;
}

.doc .mod,
.doc .x {
    width: 11px;
    height: 11px;
}

.canvas {
    flex: 1;
    position: relative;
    overflow: hidden;
}

.part {
    position: absolute;
    left: 548px;
    top: 128px;
    width: 500px;
    height: 440px;
}

.triad {
    position: absolute;
    left: 47px;
    top: 571px;
    width: 50px;
    height: 60px;
}

.cursor {
    position: absolute;
    left: 261px;
    top: 329px;
    width: 20px;
    height: 24px;
    filter: drop-shadow(2px 2px 1px #888);
}

/* blank geometry dialog */
.dialog {
    position: absolute;
    left: 21px;
    top: 19px;
    width: 346px;
    padding: 0 5px;
    background: #efefef;
    border: 1px solid #d5d5d5;
    border-top: 0;
    font-size: 13px;
}

.dialog header {
    display: flex;
    align-items: center;
    gap: 8px;
    height: 25px;
    margin: 0 -6px 4px;
    padding: 0 9px 0 8px;
    background: #57a0b7;
    color: #fff;
}

.dialog header h3 {
    flex: 1;
    font-size: 15px;
}

.dialog header svg {
    width: 14px;
    height: 14px;
}

.dialog section {
    margin-bottom: 3px;
    background: #fff;
    border-bottom: 1px solid #bbb;
}

.dialog h4 {
    display: flex;
    align-items: center;
    justify-content: space-between;
    height: 25px;
    padding: 0 6px 2px 7px;
    font-size: 15px;
    color: #15647f;
}

.dialog h4 svg {
    width: 12px;
    height: 10px;
}

.dialog .hover {
    background: #afd7de;
}

.types {
    display: flex;
    align-items: center;
    gap: 2px;
    padding: 6px 9px 2px;
}

.types button {
    width: 32px;
    height: 32px;
}

.types svg {
    width: 22px;
    height: 24px;
}

.types .on {
    background: #8ec2d1;
}

.types label {
    display: flex;
    align-items: center;
    gap: 5px;
    margin-left: auto;
    padding: 0 2px 8px 0;
}

.types input {
    appearance: none;
    width: 13px;
    height: 13px;
    margin: 0;
    border: 1px solid #777;
    background: #f0f0f0;
}

.types input::before {
    content: "";
    display: block;
    width: 4px;
    height: 8px;
    margin: 0 0 0 4px;
    border: solid #2c3f78;
    border-width: 0 2px 2px 0;
    transform: rotate(40deg);
}

.pick {
    display: flex;
    gap: 2px;
    padding: 0 9px 8px;
}

.pick span {
    flex: 1;
    display: flex;
    align-items: center;
    gap: 5px;
    padding-left: 1px;
    background: #ffe078;
}

.pick button {
    width: 32px;
    height: 32px;
    background: #ffe078;
}

.pick span svg {
    width: 14px;
    height: 14px;
}

.pick button svg {
    width: 22px;
    height: 22px;
}

.fields {
    padding: 6px 9px 8px;
    display: flex;
    flex-direction: column;
    gap: 2px;
}

.row {
    display: flex;
    align-items: center;
    justify-content: space-between;
}

.row input {
    width: 90px;
    height: 25px;
    padding: 2px 3px;
    border: 1px solid #999;
    background: #fff;
    text-align: right;
    font: 17px/19px "Liberation Mono", monospace;
    color: #444;
}

.row .marked {
    background: #3399ff content-box;
    color: #fff;
}

.reset {
    width: 32px;
    height: 32px;
    border: 1px solid #999;
}

.reset svg {
    width: 18px;
    height: 18px;
}

.limits .row {
    justify-content: flex-start;
}

.limits label {
    width: 32px;
}

.limits input + label {
    width: 36px;
    margin-left: auto;
}

.dialog p {
    padding: 8px 9px 11px;
}

.dialog footer {
    display: flex;
    justify-content: flex-end;
    gap: 5px;
    padding: 8px 10px 10px;
}

.dialog footer button {
    width: 56px;
    height: 27px;
    background: #dcdcdc;
    border: 1px solid #aaa;
}

.dialog footer .ok {
    background: #70b4c6;
    border-color: #70b4c6;
    color: #fff;
}

/* status line */
.status {
    height: 24px;
    flex: none;
    display: flex;
    align-items: center;
    padding: 0 55px 2px 3px;
    border-top: 1px solid #aaa;
    border-bottom: 2px solid #35546a;
    font-weight: 500;
}

.status span:nth-child(2) {
    margin: 0 auto;
    padding-left: 8px;
}
```
